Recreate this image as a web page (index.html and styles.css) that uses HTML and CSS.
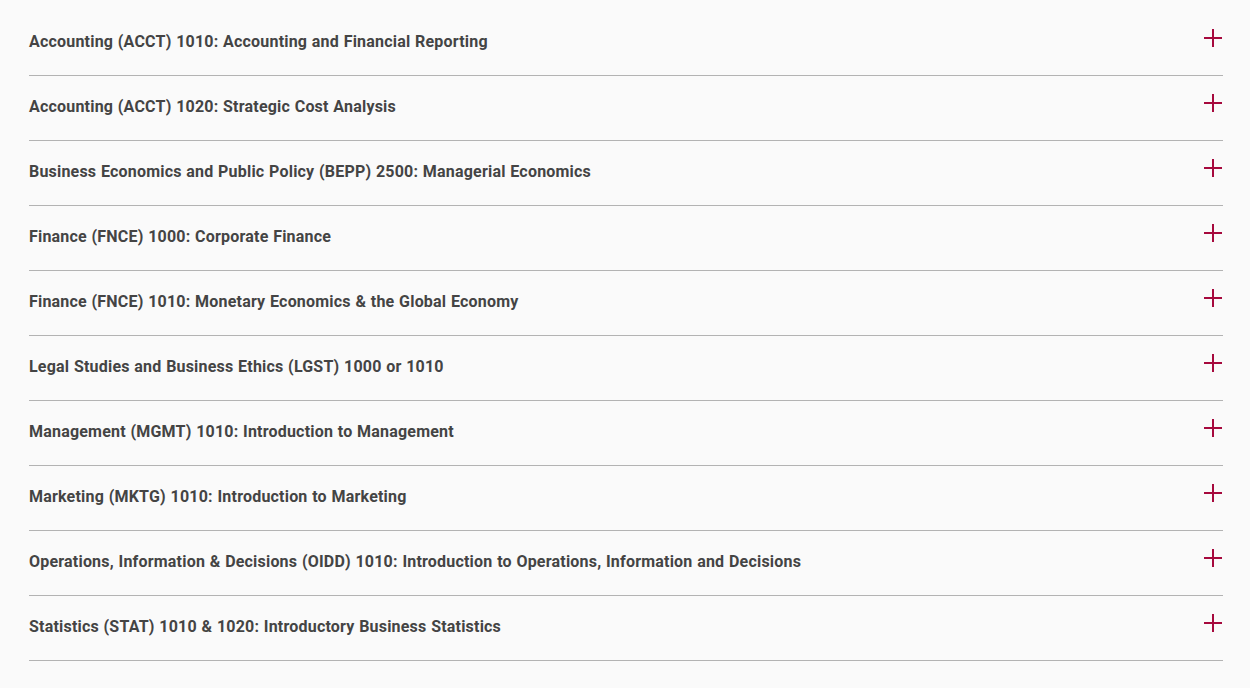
FILE: index.html
```html
<!DOCTYPE html>
<html lang="en">
<head>
  <meta charset="UTF-8" />
  <meta name="viewport" content="width=device-width, initial-scale=1.0" />
  <title>Core Courses</title>
  <link rel="stylesheet" href="styles.css">
</head>
<body>
  <div class="accordion">
    <div class="acc-item">
      <span class="acc-title">Accounting (ACCT) 1010: Accounting and Financial Reporting</span>
      <span class="acc-toggle"></span>
    </div>
    <div class="acc-item">
      <span class="acc-title">Accounting (ACCT) 1020: Strategic Cost Analysis</span>
      <span class="acc-toggle"></span>
    </div>
    <div class="acc-item">
      <span class="acc-title">Business Economics and Public Policy (BEPP) 2500: Managerial Economics</span>
      <span class="acc-toggle"></span>
    </div>
    <div class="acc-item">
      <span class="acc-title">Finance (FNCE) 1000: Corporate Finance</span>
      <span class="acc-toggle"></span>
    </div>
    <div class="acc-item">
      <span class="acc-title">Finance (FNCE) 1010: Monetary Economics &amp; the Global Economy</span>
      <span class="acc-toggle"></span>
    </div>
    <div class="acc-item">
      <span class="acc-title">Legal Studies and Business Ethics (LGST) 1000 or 1010</span>
      <span class="acc-toggle"></span>
    </div>
    <div class="acc-item">
      <span class="acc-title">Management (MGMT) 1010: Introduction to Management</span>
      <span class="acc-toggle"></span>
    </div>
    <div class="acc-item">
      <span class="acc-title">Marketing (MKTG) 1010: Introduction to Marketing</span>
      <span class="acc-toggle"></span>
    </div>
    <div class="acc-item">
      <span class="acc-title">Operations, Information &amp; Decisions (OIDD) 1010: Introduction to Operations, Information and Decisions</span>
      <span class="acc-toggle"></span>
    </div>
    <div class="acc-item">
      <span class="acc-title">Statistics (STAT) 1010 &amp; 1020: Introductory Business Statistics</span>
      <span class="acc-toggle"></span>
    </div>
  </div>
</body>
</html>
```

FILE: styles.css
```css
body {
  margin: 0;
  background-color: #fafafa;
  font-family: Roboto, 'Liberation Sans', sans-serif;
  color: #444;
}

.accordion {
  padding: 11px 27px 0 29px;
}

.acc-item {
  display: flex;
  justify-content: space-between;
  align-items: flex-start;
  height: 64px;
  border-bottom: 1px solid #b3b3b3;
}

.acc-title {
  font-size: 16px;
  font-weight: 700;
  line-height: 20px;
  letter-spacing: 0.2px;
  word-spacing: 0.5px;
  margin-top: 21px;
}

.acc-toggle {
  position: relative;
  width: 18px;
  height: 18px;
  margin-top: 18px;
  margin-right: 1px;
}

/* plus sign drawn from two bars */
.acc-toggle::before,
.acc-toggle::after {
  content: '';
  position: absolute;
  background: #a6093d;
}

.acc-toggle::before {
  left: 0;
  top: 8px;
  width: 18px;
  height: 2px;
}

.acc-toggle::after {
  left: 8px;
  top: 0;
  width: 2px;
  height: 18px;
}
```
